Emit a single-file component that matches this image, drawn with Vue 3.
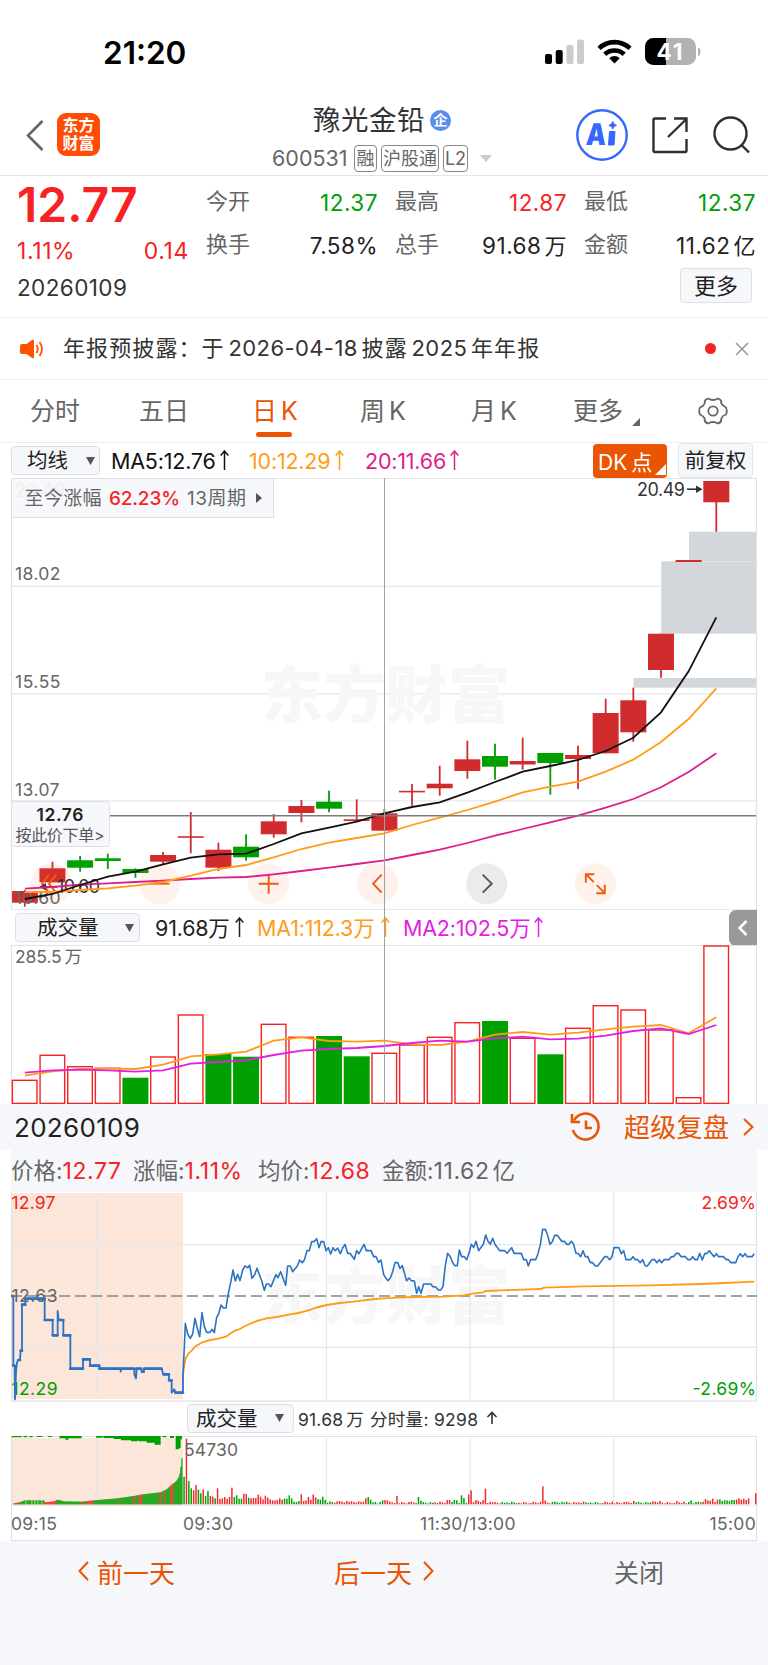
<script setup>
import { ref, computed } from 'vue';

const tabs = [
  { name: '分时' },
  { name: '五日' },
  { name: '日 K' },
  { name: '周 K' },
  { name: '月 K' },
  { name: '更多', more: true },
];
const selectedTab = ref('日 K');

const quotes = [
  { label: '今开', value: '12.37', tone: 'green' },
  { label: '最高', value: '12.87', tone: 'red' },
  { label: '最低', value: '12.37', tone: 'green' },
  { label: '换手', value: '7.58%', tone: '' },
  { label: '总手', value: '91.68', unit: '万', tone: '' },
  { label: '金额', value: '11.62', unit: '亿', tone: '' },
];

// Daily candles: [high, top, bottom, low, up?]
const candles = [
  [890, 891, 902.7, 906.7, 1],
  [861.7, 868.3, 882.3, 882.3, 1],
  [856, 860.3, 867.7, 871.7, 0],
  [853.7, 858.3, 861, 869, 0],
  [868.3, 869, 873, 877.7, 0],
  [852, 855, 861.7, 864.3, 1],
  [812, 836.2, 837.8, 853.3, 1],
  [842.7, 849.7, 867.7, 871, 1],
  [834.3, 846.7, 857.3, 860.7, 0],
  [814, 821.3, 834.3, 837.7, 1],
  [800, 806, 813, 822.3, 1],
  [790.7, 801.7, 808.7, 812.3, 0],
  [799.3, 819.3, 821, 821, 1],
  [809, 813.3, 830.7, 830.7, 1],
  [784, 790.8, 792.4, 805.7, 1],
  [765.7, 783.7, 788.3, 795.7, 1],
  [740.7, 759.3, 771, 778.7, 1],
  [743.7, 756, 766.7, 779.7, 0],
  [737.7, 761, 764.5, 769.7, 1],
  [753, 753, 763, 794.7, 0],
  [745.7, 755, 759, 789, 1],
  [698.7, 713, 753.3, 753.3, 1],
  [687.7, 700.3, 732.3, 741.7, 1],
  [633.7, 633.7, 670, 677.7, 1],
  [560, 560, 562, 562, 1],
  [481, 481, 502.3, 531.7, 1],
];
const ma5 = [899, 894, 885, 876.7, 871.7, 864.3, 857.7, 854.3, 853.7, 844, 833.3, 827.7, 821.7, 813.3, 807, 802.3, 792.7, 782, 771.7, 766, 760, 751, 737.7, 712.3, 671.3, 617.3];
const ma10 = [892, 892, 890, 888.3, 885.7, 882, 875.7, 869, 865, 857.3, 849, 842.7, 838, 833.3, 825, 817.7, 810, 801.7, 792.3, 786.7, 781.7, 771.7, 759.7, 742, 719, 688.3];
const ma20 = [888.7, 887, 884.7, 883.3, 882, 880.7, 879, 877.7, 877, 874.3, 871, 867.7, 864, 860.3, 855, 849.7, 843, 835.7, 829, 822.3, 815.7, 807.7, 799, 787.3, 772, 753.3];

const volumes = [1080.3, 1055.3, 1066.7, 1068.3, 1077.7, 1057, 1015, 1054, 1056.7, 1024.3, 1037.3, 1036, 1056.3, 1053.3, 1045, 1037.3, 1022.7, 1021, 1038.3, 1054.3, 1028.3, 1005.7, 1010, 1030, 1097.7, 946];
const fallingVolumes = [4, 7, 8, 11, 12, 17, 19];
const vma1 = [1075.7, 1071.3, 1069, 1068.7, 1069, 1064.7, 1056.3, 1054.3, 1051.7, 1040.7, 1037.3, 1041, 1041.7, 1040.7, 1044.3, 1045, 1041.7, 1034.7, 1032, 1034.7, 1032.7, 1029.3, 1026.7, 1025, 1033.3, 1017.3];
const vma2 = [1072.7, 1070.3, 1069.7, 1070.3, 1071.7, 1070.3, 1063.7, 1062, 1060.3, 1055, 1050.7, 1049, 1048, 1046, 1043, 1040.7, 1041.7, 1038.3, 1036.7, 1039.3, 1038.7, 1035.7, 1031, 1028.3, 1034, 1025];

const cx = (i) => 24.8 + i * 27.66;
const line = (ys) => ys.map((y, i) => `${cx(i).toFixed(1)},${y}`).join(' ');

const tools = [
  { x: 51, icon: 'M-2 -9l-7 9l7 9M5 -9l-7 9l7 9' },
  { x: 160, icon: 'M-9.5 0h19' },
  { x: 268.7, icon: 'M-10 0h20M0 -10v20' },
  { x: 377.7, icon: 'M4 -9l-8.5 9l8.5 9' },
  { x: 486.7, icon: 'M-4 -9l9 9l-9 9', gray: true },
  { x: 595.3, icon: 'M-9.5 -1v-8.5h8.5M-9.5 -9.5l8 8M9.5 1v8.5h-8.5M9.5 9.5l-8 -8' },
];

// Intraday series, three units per pixel
const auction = [
  [35, 348], [40, 348], [40, 557], [44, 557], [45, 658], [48, 575], [51, 547], [55, 540], [60, 540], [62, 512], [66, 512], [66, 374], [76, 374], [76, 356], [134, 356], [134, 420], [158, 420], [158, 466], [173, 466], [173, 393], [176, 420], [190, 420], [190, 466], [211, 466], [211, 566], [249, 566], [249, 538], [270, 538], [270, 557], [298, 557], [298, 566], [362, 566], [362, 575], [364, 566], [403, 566], [403, 583], [408, 595], [410, 566], [423, 566], [426, 575], [431, 575], [432, 566], [485, 566], [490, 583], [507, 583], [507, 601], [515, 601], [515, 638], [523, 628], [526, 638], [549, 638], [549, 585],
];
const auctionLine = auction.map((p) => p.join()).join(' ');
const auctionFlats = computed(() =>
  auction
    .slice(1)
    .map((p, i) => (p[1] === auction[i][1] ? `M${auction[i].join(' ')}H${p[0]}` : ''))
    .join('')
);

const price =
  '549,585 553,500 556,430 563,462 571,475 578,462 585,415 592,445 599,470 606,398 613,440 620,457 630,457 636,448 643,458 650,412 656,402 663,375 670,384 678,384 685,340 692,308 699,270 706,303 713,283 720,302 728,270 735,258 743,263 749,256 756,295 764,284 771,265 785,302 793,331 799,312 806,312 813,320 828,284 834,293 842,275 857,316 863,258 871,258 878,275 892,258 899,240 907,248 913,240 921,212 928,212 935,185 942,185 950,176 957,203 963,185 971,185 978,212 985,203 992,222 999,203 1006,212 1013,204 1021,221 1028,204 1035,193 1043,220 1050,220 1063,238 1070,212 1077,221 1092,193 1099,212 1113,212 1121,230 1128,230 1136,247 1143,240 1151,284 ' +
  '1158,295 1164,302 1171,294 1178,275 1185,248 1193,248 1200,265 1207,257 1220,302 1227,294 1234,302 1243,303 1250,340 1256,320 1263,340 1271,312 1292,312 1299,320 1307,321 1315,330 1322,330 1329,320 1336,256 1343,220 1351,230 1358,248 1364,257 1372,257 1378,210 1385,230 1393,230 1400,239 1407,220 1414,193 1421,203 1428,184 1436,212 1450,193 1457,165 1464,184 1471,193 1478,175 1485,193 1499,212 1514,212 1521,220 1535,203 1542,220 1564,220 1571,239 1579,239 1585,258 1592,239 1607,239 1614,221 1621,194 1628,148 1636,148 1643,166 1650,193 1657,185 1664,166 1672,166 1685,184 1693,184 1700,193 1707,193 1714,184 1721,193 1728,220 1735,221 1742,230 1749,212 1756,230 1763,230 1771,248 1778,248 1786,258 1793,258 1814,230 1821,230 1829,239 1836,230 1842,203 1857,203 1864,221 1871,212 1878,239 1892,239 1899,230 1906,239 1913,239 1921,248 1928,239 1936,258 1942,258 1956,239 1964,239 1971,248 1978,239 1985,248 1992,239 2007,239 2014,230 2021,230 2029,220 2036,220 2043,230 2056,230 2064,239 2071,239 2078,230 2085,239 2092,239 2099,220 2107,240 2114,221 2120,221 2128,212 2142,230 2149,221 2156,230 2170,230 2179,239 2185,239 2193,248 2207,248 2214,230 2221,221 2228,230 2235,221 2242,230 2256,230 2263,221';
const average =
  '549,585 553,555 557,535 565,521 575,512 587,498 597,493 607,487 630,480 655,476 680,469 692,460 705,452 720,447 735,438 770,423 800,415 830,411 870,403 895,399 925,391 945,384 980,375 1020,369 1060,365 1100,360 1125,357 1152,355 1192,353 1242,351 1332,350 1392,346 1422,340 1450,337 1457,333 1502,331 1622,327 1632,323 1752,319 1952,316 2102,312 2172,309 2263,305';

// Auction volume, interpolated between known heights
const ramp = [[40, 3], [60, 7], [72, 12], [130, 12], [133, 6], [160, 9], [172, 14], [190, 9], [245, 8], [270, 11], [350, 18], [400, 25], [425, 30], [480, 36], [500, 46], [512, 58], [528, 70], [537, 86], [541, 112], [545, 147]];
const redTicks = [[40, 56], [132, 166], [244, 250], [262, 278], [355, 357], [400, 403], [418, 424], [478, 481], [492, 494], [511, 514], [520, 522]];
const auctionBars = [];
for (let x = 40; x < 547; x += 3) {
  if ([76, 94, 103, 112, 124].includes(x)) continue;
  const n = ramp.findIndex((r) => r[0] >= x);
  const [x1, h1] = ramp[n] || ramp[ramp.length - 1];
  const [x0, h0] = ramp[Math.max(n - 1, 0)];
  const h = x1 === x0 ? h1 : h0 + ((h1 - h0) * (x - x0)) / (x1 - x0);
  auctionBars.push({ x, h, w: 3.6, red: redTicks.some((r) => x >= r[0] && x <= r[1]) });
}
const unmatched = 'M35 768h30v4h-30zM70 768h12v4h-12zM88 768h10v4h-10zM110 768h18v3h-18zM145 768h12v3h-12zM178 768h67v7h-40v4h-9v-4h-18zM288 768h20v5h-20zM310 768h172v26h-18v-6h-24v-4h-24v-2h-5v2h-18v-3h-30v-4h-22v-3h-31zM487 768h12v4h-12zM510 768h12v6h-12zM527 768h19v10h-4v25l-8 5h-7z';

const known = [83, 197, 70, 48, 42, 58, 44, 33, 45, 25, 40, 25, 23, 18, 48, 16, 18, 22, 17, 22, 50, 22, 27, 17, 17, 32, 31, 20, 18, 19, 19, 29, 23, 15, 26, 20, 15, 12, 12, 13, 18, 14, 17, 17, 27, 18, 8, 7, 10, 30, 10, 12, 22, 14, 29, 21, 16, 14, 23, 13];
const spikes = { 76: 18, 77: 22, 78: 14, 83: 12, 84: 13, 85: 12, 89: 25, 98: 22, 99: 11, 110: 13, 111: 13, 113: 13, 114: 12, 116: 27, 117: 19, 119: 29, 120: 42, 122: 13, 123: 11, 125: 13, 126: 47, 150: 54, 151: 12, 160: 8, 188: 10, 196: 9, 199: 10, 206: 10, 212: 12, 218: 16, 219: 12, 221: 17, 223: 14, 224: 15, 226: 12, 229: 13, 230: 13, 231: 14, 232: 18, 233: 14, 234: 17, 235: 13, 236: 18, 237: 0, 238: 0, 239: 33 };
const greens = [0, 2, 3, 6, 7, 9, 10, 13];
const minuteBars = Array.from({ length: 240 }, (_, k) => {
  const base = k > 216 ? 7 : k > 80 ? 3 : 5;
  const h = known[k] ?? spikes[k] ?? base + ((k * 7 + (k % 5) * 3) % 6);
  const green = k < 14 ? greens.includes(k) : (k * 5 + (k % 7) * 3) % 8 < 3 && h < 28;
  return { x: 550 + k * 7.176, h, w: 4.4, red: !green };
});
const allBars = [...auctionBars, ...minuteBars];
</script>

<template>
  <div class="page">
    <div class="status">
      <span class="time">21:20</span>
      <svg class="status-icons" width="160" height="30" viewBox="543 36 160 30">
        <rect x="545" y="54" width="7" height="10" rx="2" />
        <rect x="555.7" y="50" width="7" height="14" rx="2" />
        <rect x="566.5" y="45" width="7" height="19" rx="2" fill="#ccc" />
        <rect x="577" y="39.5" width="7" height="24.5" rx="2" fill="#ccc" />
        <g fill="none" stroke="#000" stroke-width="4.6">
          <path d="M599 48.3a22.5 22.5 0 0 1 31 0" />
          <path d="M604.8 54.3a14.2 14.2 0 0 1 19.4 0" />
        </g>
        <path d="M614.5 63.5l-5.2-5.3a7.4 7.4 0 0 1 10.4 0z" />
        <clipPath id="cell"><rect x="645" y="38" width="51" height="27" rx="8.5" /></clipPath>
        <g clip-path="url(#cell)">
          <rect x="645" y="38" width="51" height="27" fill="#b2b2b2" />
          <rect x="645" y="38" width="21" height="27" />
        </g>
        <path d="M698 47.5c3.4 1 3.4 7.5 0 8.5z" fill="#b2b2b2" />
        <text x="656.5" y="60" class="battery" textLength="26">41</text>
      </svg>
    </div>

    <header class="header">
      <svg class="back" width="20" height="34" viewBox="0 0 20 34"><path d="M17.5 3L3 17.5L17.5 32" /></svg>
      <div class="logo"><span>东方</span><span>财富</span></div>
      <div class="stock">
        <div class="stock-name">
          <span>豫光金铅</span><i>企</i>
        </div>
        <div class="stock-code">
          <span class="code">600531</span>
          <b>融</b><b class="wide">沪股通</b><b class="l2">L2</b>
          <svg width="12" height="7"><path d="M0 0h12l-6 7z" fill="#ccc" /></svg>
        </div>
      </div>
      <svg class="actions" width="180" height="56" viewBox="575 107 180 56">
        <circle cx="602" cy="135" r="24.7" stroke="#3668ff" stroke-width="2.4" />
        <text class="ai" transform="translate(585.5 145) skewX(-4)" textLength="20" lengthAdjust="spacingAndGlyphs">A</text>
        <path d="M609.5 131.5h5.5l-1 13.5h-5.5zM612.7 121.5l1.2 2.6 2.6 1.2-2.6 1.2-1.2 2.6-1.2-2.6-2.6-1.2 2.6-1.2z" fill="#3668ff" stroke="#3668ff" stroke-linejoin="round" />
        <g stroke="#2d2f33" stroke-width="2.4">
          <path d="M666 118.5H655q-1.5 0-1.5 1.5v30.5q0 1.5 1.5 1.5h30q1.5 0 1.5-1.5V139M674 118.5h12.5v13.5M686.5 119L668 137" />
          <circle cx="730.5" cy="133.5" r="16" />
          <path d="M741.5 145l7.5 7.5" />
        </g>
      </svg>
    </header>

    <section class="quote">
      <div class="quote-left">
        <div class="last">12.77</div>
        <div class="change"><span>1.11%</span><span>0.14</span></div>
        <div class="day">20260109</div>
      </div>
      <div class="quote-right">
        <div class="quote-grid">
          <div v-for="q in quotes" :key="q.label" class="cell">
            <span class="label">{{ q.label }}</span>
            <span class="value" :class="q.tone">{{ q.value }}<em v-if="q.unit">{{ q.unit }}</em></span>
          </div>
        </div>
        <button class="more-btn">更多</button>
      </div>
    </section>

    <section class="notice">
      <svg width="24" height="20" viewBox="0 0 24 20">
        <path d="M2 5h4.500L12 1q2-1 2 1v16q0 2-2 1l-5.500-4H2q-2 0-2-2V7q0-2 2-2z" fill="#ff5200" />
        <path d="M16.5 6q2.5 4 0 8M19.5 3q5 7 0 14" fill="none" stroke="#ff5200" stroke-width="1.8" />
      </svg>
      <p>年报预披露：于 <span>2026-04-18</span> 披露 <span>2025</span> 年年报</p>
      <i class="dot"></i>
      <svg class="close" width="14" height="14"><path d="M1 1l12 12M13 1L1 13" stroke="#999" stroke-width="1.6" /></svg>
    </section>

    <nav class="tabs">
      <button
        v-for="tab in tabs"
        :key="tab.name"
        :class="{ active: selectedTab === tab.name }"
        @click="selectedTab = tab.name"
      >
        {{ tab.name }}<svg v-if="tab.more" width="8" height="8"><path d="M8 0v8H0z" fill="#666" /></svg>
      </button>
      <svg class="gear" width="30" height="30" viewBox="-15 -15 30 30">
        <path d="M-5 -12.5Q0 -9.5 5 -12.5Q8.8 -11.5 8.3 -7.5Q10 -5 13 -3.5Q14.5 0 13 3.5Q9.5 4.5 8.3 7.5Q8.8 11.5 5 12.5Q0 9.5 -5 12.5Q-8.8 11.5 -8.3 7.5Q-9.5 5 -13 3.5Q-14.5 0 -13 -3.5Q-9.5 -4.5 -8.3 -7.5Q-8.8 -11.5 -5 -12.5z" />
        <circle r="4.7" />
      </svg>
    </nav>

    <div class="kline">
      <div class="ma-row">
        <button class="picker ma-picker">均线<svg width="9" height="8"><path d="M0 0h9L4.5 8z" /></svg></button>
        <span class="m5">MA5:12.76<svg class="up"><path d="M4.5 20V1M.7 5.5L4.5 1l3.8 4.5" /></svg></span>
        <span class="m10">10:12.29<svg class="up"><path d="M4.5 20V1M.7 5.5L4.5 1l3.8 4.5" /></svg></span>
        <span class="m20">20:11.66<svg class="up"><path d="M4.5 20V1M.7 5.5L4.5 1l3.8 4.5" /></svg></span>
        <button class="dk">DK 点<svg width="11" height="11"><path d="M11 0v11H0z" fill="#fff" /></svg></button>
        <button class="adjust">前复权</button>
      </div>

      <svg class="chart" width="746" height="432" viewBox="11 478 746 432">
        <path class="grid" d="M11 586.3H757M11 693.8H757M11 800.8H757" />
        <text class="watermark" x="261" y="718" textLength="249">东方财富</text>
        <g fill="#d3d6db">
          <rect x="689" y="531.7" width="68" height="29.3" />
          <rect x="661.3" y="561.3" width="96" height="72.4" />
          <rect x="633.5" y="678" width="124" height="9.7" />
        </g>
        <g v-for="(c, i) in candles" :key="i" :fill="c[4] ? '#d02c2e' : '#00a000'">
          <rect :x="cx(i) - 0.9" :y="c[0]" width="1.8" :height="c[3] - c[0]" />
          <rect :x="cx(i) - 13" :y="c[1]" width="26" :height="c[2] - c[1]" />
        </g>
        <g v-for="t in tools" :key="t.x" :transform="`translate(${t.x} 883.7)`">
          <circle r="20.5" :fill="t.gray ? '#ebebeb' : 'rgba(250, 105, 30, 0.09)'" />
          <path :d="t.icon" fill="none" :stroke="t.gray ? '#555' : '#f05a0a'" stroke-width="1.9" />
        </g>
        <g class="axis">
          <text x="15" y="580.3" textLength="45.5">18.02</text>
          <text x="15" y="688.3" textLength="45.5">15.55</text>
          <text x="15" y="796" textLength="44.5">13.07</text>
          <text x="15" y="903.5" textLength="45.5">10.60</text>
        </g>
        <text class="mark" x="57" y="893" textLength="43">10.60</text>
        <path d="M43 886.800h14" stroke="#333" stroke-width="1.6" />
        <path d="M46 883l-6.5 3.7l6.5 3.7z" fill="#333" />
        <text class="mark" x="637" y="495.5" textLength="48">20.49</text>
        <path d="M687 489.2h14" stroke="#333" stroke-width="1.6" />
        <path d="M696 485.5l6.5 3.7l-6.5 3.7z" fill="#333" />
        <polyline class="ma" :points="line(ma20)" stroke="#df1c8b" />
        <polyline class="ma" :points="line(ma10)" stroke="#ff9c17" />
        <polyline class="ma" :points="line(ma5)" stroke="#111" />
        <path d="M109 815.7H757" stroke="#7c7c7c" stroke-width="1.4" />
        <path class="frame" d="M11.5 910V478.3H756.5V910M11 909.8H757" />
        <rect x="11.5" y="801.5" width="98" height="45" rx="3" class="box" />
        <text class="cross-price" x="36.5" y="821" textLength="47">12.76</text>
        <text class="order" x="15.5" y="841" textLength="89">按此价下单&gt;</text>
        <rect x="11.5" y="478.5" width="262" height="39" class="box" />
        <text class="ghost" x="15" y="497">20.49</text>
        <g class="range">
          <text x="24.5" y="505" textLength="77">至今涨幅</text>
          <text x="109" y="505" class="up-pct" textLength="71">62.23%</text>
          <text x="187" y="505" textLength="59">13周期</text>
          <path d="M256 493l6 5-6 5z" fill="#555" />
        </g>
      </svg>

      <div class="vol-row">
        <button class="picker vol-picker">成交量<svg width="9" height="8"><path d="M0 0h9L4.5 8z" /></svg></button>
        <span class="v0">91.68万<svg class="up"><path d="M4.5 20V1M.7 5.5L4.5 1l3.8 4.5" /></svg></span>
        <span class="v1">MA1:112.3万<svg class="up"><path d="M4.5 20V1M.7 5.5L4.5 1l3.8 4.5" /></svg></span>
        <span class="v2">MA2:102.5万<svg class="up"><path d="M4.5 20V1M.7 5.5L4.5 1l3.8 4.5" /></svg></span>
        <button class="collapse"><svg width="10" height="16"><path d="M8.5 1L1.5 8l7 7" fill="none" stroke="#fff" stroke-width="2.6" /></svg></button>
      </div>

      <svg class="chart" width="746" height="159" viewBox="11 945 746 159">
        <path class="frame" d="M11.5 1104V945.5H756.5V1104" />
        <g v-for="(v, i) in volumes" :key="i">
          <rect v-if="fallingVolumes.includes(i)" :x="cx(i) - 13" :y="v" width="26" :height="1104 - v" fill="#00a000" />
          <rect v-else :x="cx(i) - 12.4" :y="v" width="24.6" :height="1103.4 - v" fill="#fff" stroke="#f62223" stroke-width="1.4" />
        </g>
        <polyline class="ma" :points="line(vma1)" stroke="#ff9c17" />
        <polyline class="ma" :points="line(vma2)" stroke="#e31ee3" />
        <text class="axis vol-max" x="15" y="963" textLength="67">285.5 万</text>
      </svg>
      <div class="crosshair"></div>
    </div>

    <div class="replay">
      <span class="replay-date">20260109</span>
      <svg width="31" height="30" viewBox="0 0 31 30">
        <path d="M4 8.5A13 13 0 1 1 3 18" />
        <path d="M2 2v8h8M16 8.5V16h6" />
      </svg>
      <span class="replay-link">超级复盘</span>
      <svg class="chev" width="11" height="18"><path d="M1 1l8.5 8L1 17" /></svg>
    </div>

    <div class="info">
      <span>价格:<em>12.77</em></span>
      <span>涨幅:<em>1.11%</em></span>
      <span>均价:<em>12.68</em></span>
      <span>金额:<b>11.62</b>亿</span>
    </div>

    <svg class="chart" width="746" height="210" viewBox="11 1192 746 210">
      <rect x="11" y="1193" width="172" height="206" fill="#fce6da" />
      <text class="watermark" x="261" y="1319" textLength="249">东方财富</text>
      <path class="grid" d="M96.7 1193V1399M326.5 1193V1399M470 1193V1399M613.7 1193V1399M11 1244.7H757M11 1347.3H757" />
      <path class="frame" d="M11.5 1192V1401.3M756.5 1192V1401.3M11 1401.2H757" />
      <path d="M11 1296H757" stroke="#888" stroke-width="1.4" stroke-dasharray="11 5" />
      <g class="axis">
        <text x="11.5" y="1209" fill="#f62223" textLength="44">12.97</text>
        <text x="11.5" y="1301.5" textLength="46">12.63</text>
        <text x="11.5" y="1394.5" fill="#00a000" textLength="46">12.29</text>
        <text x="701.5" y="1209" fill="#f62223" textLength="54.5">2.69%</text>
        <text x="692.5" y="1394.5" fill="#00a000" textLength="63.5">-2.69%</text>
      </g>
      <g transform="translate(0 1180) scale(0.33333)" fill="none" stroke-linejoin="round">
        <polyline :points="average" stroke="#ff9c17" stroke-width="5.5" />
        <polyline :points="auctionLine" stroke="#2d72c4" stroke-width="5.5" />
        <path :d="auctionFlats" stroke="#2d72c4" stroke-width="8" stroke-linecap="round" />
        <polyline :points="price" stroke="#2d72c4" stroke-width="4.8" />
      </g>
    </svg>

    <div class="minute-row">
      <button class="picker minute-picker">成交量<svg width="9" height="8"><path d="M0 0h9L4.5 8z" /></svg></button>
      <span class="t0">91.68 万</span>
      <span class="t1">分时量: 9298</span>
      <svg width="12" height="14" viewBox="0 0 12 14"><path d="M6 13V1.5M1.5 6L6 1.5L10.5 6" /></svg>
    </div>

    <svg class="chart" width="746" height="70" viewBox="11 1436 746 70">
      <rect x="11" y="1438" width="172" height="67" fill="#fce6da" />
      <path class="grid" d="M96.7 1438V1505M326.5 1438V1505M470 1438V1505M613.7 1438V1505" />
      <path class="frame" d="M11 1436.3H757M11.5 1436V1506M756.5 1436V1506M11 1505.8H757" />
      <g transform="translate(0 1180) scale(0.33333)">
        <path :d="unmatched" fill="#00a000" />
        <rect v-for="(b, i) in allBars" :key="i" :x="b.x" :y="973 - b.h" :width="b.w" :height="b.h" :fill="b.red ? '#f0282a' : '#00a000'" />
      </g>
      <text class="axis" x="184" y="1455.5" textLength="54">54730</text>
    </svg>
    <div class="times">
      <span>09:15</span><span>09:30</span><span>11:30/13:00</span><span>15:00</span>
    </div>

    <footer class="footer">
      <button class="prev"><svg class="chev" width="11" height="20"><path d="M10 1L1.5 10l8.5 9" /></svg>前一天</button>
      <button class="next">后一天<svg class="chev" width="11" height="20"><path d="M1 1l8.5 9L1 19" /></svg></button>
      <button class="shut">关闭</button>
    </footer>
  </div>
</template>

<style>
body {
  margin: 0;
  background: #fff;
}
</style>

<style scoped>
.page {
  width: 768px;
  height: 1665px;
  overflow: hidden;
  display: flex;
  flex-direction: column;
  background: #fff;
  color: #333;
  font-family: Inter, 'Noto Sans CJK SC', sans-serif;
  white-space: nowrap;
}

.page * {
  box-sizing: border-box;
}

.page > * {
  flex-shrink: 0;
}

svg {
  display: block;
  flex-shrink: 0;
}

button {
  padding: 0;
  border: none;
  background: none;
  color: inherit;
  font-family: inherit;
  white-space: nowrap;
}

em,
i {
  font-style: normal;
}

/* Status bar */
.status {
  height: 100px;
  display: flex;
  justify-content: space-between;
  padding: 36px 65px 0 103px;
}

.time {
  font-size: 31.5px;
  line-height: 34px;
  font-weight: 600;
  color: #000;
}

.battery {
  font-size: 22.5px;
  font-weight: 700;
  fill: #fff;
}

/* Header */
.header {
  height: 76px;
  display: flex;
  padding-left: 25px;
  border-bottom: 1px solid #e4e4e4;
}

.back {
  margin-top: 18px;
  fill: none;
  stroke: #666;
  stroke-width: 2.6;
}

.logo {
  width: 43px;
  height: 43px;
  margin: 13px 0 0 12px;
  padding-top: 3px;
  border-radius: 9px;
  background: #ff4d05;
  color: #fff;
  font-size: 16px;
  font-weight: 700;
  line-height: 18px;
  text-align: center;
}

.logo span {
  display: block;
}

.stock {
  width: 303px;
  margin-left: 172px;
}

.stock-name {
  display: flex;
  align-items: center;
  height: 40px;
  padding-left: 41px;
  font-size: 27.5px;
  line-height: 40px;
}

.stock-name span {
  letter-spacing: 0.5px;
}

.stock-name i {
  width: 21px;
  height: 21px;
  margin-left: 5px;
  border-radius: 50%;
  background: #5b8dee;
  color: #fff;
  font-size: 14px;
  font-weight: 700;
  line-height: 19px;
  text-align: center;
}

.stock-code {
  display: flex;
  align-items: center;
  height: 36px;
  color: #666;
}

.code {
  width: 82px;
  font-size: 21.5px;
}

.stock-code b {
  width: 23px;
  height: 27px;
  margin-right: 4px;
  border: 1px solid #888;
  border-radius: 4px;
  font-size: 18px;
  font-weight: 400;
  line-height: 25px;
  display: flex;
  justify-content: center;
}

.stock-code .wide {
  width: 58px;
}

.stock-code .l2 {
  width: 25px;
  margin-right: 12px;
}

.actions {
  margin-top: 7px;
  fill: none;
}

.ai {
  font-size: 30px;
  font-weight: 900;
  fill: #3668ff;
}

/* Quote */
.quote {
  height: 142px;
  display: flex;
  border-bottom: 1px solid #eee;
}

.quote-left {
  width: 206px;
  padding: 0 17px;
}

.last {
  height: 58px;
  color: #f62223;
  font-size: 48px;
  font-weight: 600;
  line-height: 58px;
}

.change {
  display: flex;
  justify-content: space-between;
  color: #f62223;
  font-size: 23px;
  letter-spacing: 0.6px;
  line-height: 35px;
}

.day {
  font-size: 22.5px;
  letter-spacing: 0.4px;
  line-height: 37px;
}

.quote-right {
  flex: 1;
  padding-top: 5px;
}

.quote-grid {
  display: grid;
  grid-template-columns: 172px 172px 172px;
  column-gap: 17px;
  grid-auto-rows: 43px;
}

.cell {
  height: 43px;
  display: flex;
  justify-content: space-between;
  font-size: 22.5px;
  line-height: 43px;
}

.label {
  margin-top: -1px;
  color: #666;
  font-size: 22px;
}

.value {
  height: 43px;
  color: #222;
  letter-spacing: 0.5px;
}

.value em {
  margin-left: 3px;
  font-size: 22px;
  line-height: 1;
}

.red {
  color: #f62223;
}

.green {
  color: #00a000;
}

.more-btn {
  display: block;
  width: 72px;
  height: 35px;
  margin: 1px 0 0 474px;
  border: 1px solid #dcdfe6;
  border-radius: 4px;
  background: #f6f7fa;
  color: #222;
  font-size: 22px;
  line-height: 32px;
}

/* Notice */
.notice {
  height: 62px;
  display: flex;
  align-items: center;
  padding: 0 19px 0 20px;
  border-bottom: 1px solid #f0f0f0;
}

.notice p {
  width: 642px;
  height: 62px;
  margin: -2px 0 0 19px;
  font-size: 22px;
  line-height: 62px;
  letter-spacing: 1.1px;
  word-spacing: -3.5px;
}

.notice p span {
  letter-spacing: 0.4px;
}

.dot {
  width: 11px;
  height: 11px;
  border-radius: 50%;
  background: #f62223;
  margin-right: auto;
}

/* Tabs */
.tabs {
  height: 63px;
  display: grid;
  grid-template-columns: 30px 109px 113px 108px 111px 102px 125px 30px;
  align-items: center;
  border-bottom: 1px solid #f0f0f0;
}

.tabs button {
  height: 60px;
  color: #666;
  font-size: 25px;
  line-height: 60px;
  text-align: left;
  word-spacing: -3px;
  display: flex;
}

.tabs button:first-child {
  grid-column-start: 2;
}

.tabs button svg {
  margin: 37px 0 0 9px;
}

.tabs .active {
  flex-direction: column;
  color: #ea5504;
  width: 44px;
}

.tabs .active::after {
  content: '';
  width: 36px;
  height: 5px;
  margin: -9px 0 0 4px;
  border-radius: 3px;
  background: #ea5504;
}

.gear {
  fill: none;
  stroke: #666;
  stroke-width: 1.8;
}

/* K line */
.kline {
  position: relative;
}

.ma-row,
.vol-row {
  display: flex;
  align-items: center;
  height: 35px;
  padding-left: 11px;
  font-size: 21.5px;
}

.picker {
  display: flex;
  align-items: center;
  justify-content: space-between;
  height: 29px;
  border: 1px solid #dcdfe6;
  border-radius: 4px;
  background: #f6f7fa;
  color: #222;
  font-size: 20.5px;
  line-height: 27px;
}

.picker svg path {
  fill: #555;
}

.ma-row > span,
.vol-row > span {
  display: flex;
  align-items: center;
  justify-content: space-between;
  line-height: 32px;
}

.up {
  width: 9px;
  height: 21px;
  fill: none;
  stroke: currentColor;
  stroke-width: 1.5;
}

.ma-picker {
  width: 89px;
  padding: 0 4px 0 15px;
}

.m5 {
  width: 118px;
  margin-left: 11px;
  color: #111;
  letter-spacing: -0.2px;
}

.m10 {
  width: 95px;
  margin-left: 20px;
  color: #ff9c17;
  letter-spacing: -0.2px;
}

.m20 {
  width: 94px;
  margin-left: 21px;
  color: #df1c8b;
  letter-spacing: -0.2px;
}

.dk {
  display: flex;
  align-items: center;
  width: 74px;
  height: 34px;
  margin-left: 134px;
  padding-left: 5px;
  border-radius: 4px;
  background: #ea5504;
  color: #fff;
  font-size: 21px;
  word-spacing: -2px;
}

.dk svg {
  margin: 17px 0 0 3px;
}

.adjust {
  width: 75px;
  height: 35px;
  margin-left: 11px;
  border: 1px solid #e4e6eb;
  border-radius: 4px;
  background: #f6f7fa;
  color: #222;
  font-size: 20.5px;
  line-height: 31px;
}

.chart {
  margin-left: 11px;
}

.grid {
  fill: none;
  stroke: #e3e8ee;
  stroke-width: 1.3;
}

.frame {
  fill: none;
  stroke: #dfe2e8;
  stroke-width: 1.2;
}

.watermark {
  font-size: 62px;
  font-weight: 900;
  fill: #f7f7f7;
}

.axis {
  font-size: 17.5px;
  fill: #666;
}

.vol-max {
  word-spacing: -2px;
}

.mark {
  font-size: 18px;
  fill: #333;
}

.ma {
  fill: none;
  stroke-width: 1.8;
}

.box {
  fill: #f7f8fb;
  stroke: #dcdfe6;
}

.cross-price {
  font-size: 17.5px;
  font-weight: 600;
  fill: #222;
}

.order {
  font-size: 16px;
  fill: #555;
}

.ghost {
  font-size: 18px;
  fill: #efeff2;
}

.range {
  font-size: 19px;
  fill: #666;
}

.up-pct {
  font-weight: 500;
  fill: #f62223;
}

.vol-row {
  padding-left: 15px;
}

.vol-picker {
  width: 125px;
  padding: 0 5px 0 21px;
}

.v0 {
  width: 89px;
  margin-left: 15px;
  color: #222;
  letter-spacing: -0.2px;
}

.v1 {
  width: 133px;
  margin-left: 13px;
  color: #ff9c17;
  letter-spacing: -0.2px;
}

.v2 {
  width: 140px;
  margin-left: 13px;
  color: #e31ee3;
  letter-spacing: -0.2px;
}

.collapse {
  width: 28px;
  height: 36px;
  margin-left: auto;
  margin-right: 11px;
  padding-left: 9px;
  border-radius: 7px 0 0 7px;
  background: #999;
}

.crosshair {
  position: absolute;
  left: 384px;
  top: 35px;
  bottom: 0;
  width: 1px;
  background: #a2a2a2;
}

/* Replay */
.replay {
  height: 46px;
  display: flex;
  align-items: center;
  padding-left: 14px;
  background: #f6f7fa;
  color: #ea5504;
}

.replay-date {
  width: 556px;
  color: #222;
  font-size: 26px;
  letter-spacing: 0.3px;
}

.replay svg {
  fill: none;
  stroke: #ea5504;
  stroke-width: 2.6;
}

.replay-link {
  width: 119px;
  margin: -3px 0 0 23px;
  font-size: 26px;
  letter-spacing: 0.3px;
}

.replay .chev,
.chev {
  fill: none;
  stroke: #ea5504;
  stroke-width: 2;
}

.info {
  width: 746px;
  height: 42px;
  margin-left: 11px;
  padding-bottom: 4px;
  display: grid;
  grid-template-columns: 122px 125px 124px 1fr;
  align-items: center;
  background: #f6f7fa;
  color: #666;
  font-size: 22.5px;
}

.info em,
.info b {
  font-size: 23px;
  font-weight: 400;
  letter-spacing: 0.6px;
}

.info em {
  color: #f62223;
}

.info b {
  margin-right: 3px;
}

.minute-row {
  height: 34px;
  display: flex;
  align-items: center;
  padding: 0 0 2px 187px;
  font-size: 17.5px;
}

.minute-picker {
  width: 107px;
  padding: 0 9px 0 8px;
}

.t0 {
  width: 72px;
  margin-left: 4px;
  letter-spacing: 0.2px;
  word-spacing: -2px;
}

.t1 {
  width: 116px;
  letter-spacing: 0.3px;
}

.minute-row > svg {
  fill: none;
  stroke: #333;
  stroke-width: 1.6;
}

.times {
  width: 746px;
  height: 35px;
  margin-left: 11px;
  display: grid;
  grid-template-columns: 172px 237px 1fr auto;
  align-items: center;
  border-right: 1px solid #dfe2e8;
  border-bottom: 1px solid #dfe2e8;
  box-shadow: inset 1px 0 #dfe2e8;
  color: #666;
  font-size: 17.5px;
  letter-spacing: 0.3px;
}

/* Footer */
.footer {
  flex: 1;
  display: flex;
  align-items: flex-start;
  padding: 10px 0 0 78px;
  background: #f6f7fa;
  color: #ea5504;
  font-size: 26px;
}

.footer button {
  display: flex;
  align-items: center;
  height: 40px;
  font-size: 26px;
}

.prev {
  width: 256px;
  gap: 8px;
}

.next {
  width: 280px;
  gap: 11px;
}

.footer .shut {
  color: #666;
  font-size: 25px;
}
</style>
